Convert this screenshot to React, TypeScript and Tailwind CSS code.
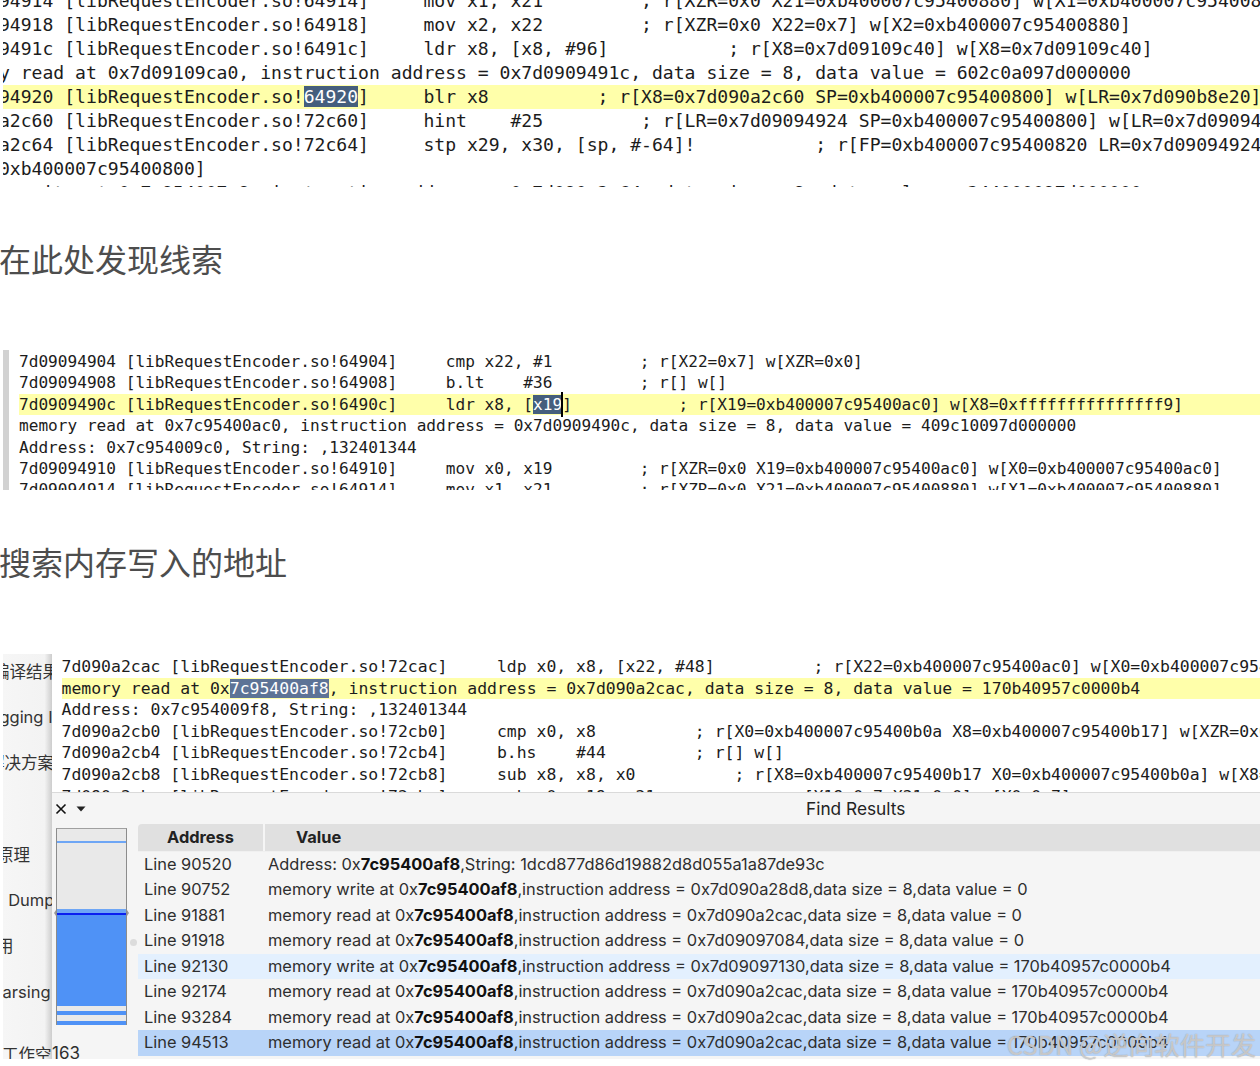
const mono = "font-['DejaVu_Sans_Mono','Liberation_Mono',monospace]";
const cjk = "font-['Noto_Sans_CJK_SC','Noto_Sans',sans-serif]";
const uiFont = "font-['Inter','Noto_Sans_CJK_SC',sans-serif]";

const Sel = ({ children, color }: { children: string; color: string }) => (
  <span className={`${color} text-white`}>{children}</span>
);

const CodeRow = ({ height, hot, children }: { height: string; hot?: boolean; children: React.ReactNode }) => (
  <div className={`${height} whitespace-pre ${hot ? "bg-[#ffffaa]" : ""}`}>{children}</div>
);

const firstBlock = [
  "7d09094914 [libRequestEncoder.so!64914]     mov x1, x21         ; r[XZR=0x0 X21=0xb400007c95400880] w[X1=0xb400007c95400880]",
  "7d09094918 [libRequestEncoder.so!64918]     mov x2, x22         ; r[XZR=0x0 X22=0x7] w[X2=0xb400007c95400880]",
  "7d0909491c [libRequestEncoder.so!6491c]     ldr x8, [x8, #96]           ; r[X8=0x7d09109c40] w[X8=0x7d09109c40]",
  "memory read at 0x7d09109ca0, instruction address = 0x7d0909491c, data size = 8, data value = 602c0a097d000000",
];

const firstBlockAfter = [
  "7d090a2c60 [libRequestEncoder.so!72c60]     hint    #25         ; r[LR=0x7d09094924 SP=0xb400007c95400800] w[LR=0x7d09094924]",
  "7d090a2c64 [libRequestEncoder.so!72c64]     stp x29, x30, [sp, #-64]!           ; r[FP=0xb400007c95400820 LR=0x7d09094924 SP=",
  "     0xb400007c95400800]",
  "memory write at 0x7c954007c8, instruction address = 0x7d090a2c64, data size = 8, data value = 344000097d000000",
];

const sidebar = [
  { text: "编译结果", cls: "-ml-[10px]" },
  { text: "Debugging Info", cls: "-ml-[45px]" },
  { text: "解决方案", cls: "-ml-[15px]" },
  { text: "", cls: "" },
  { text: "原理", cls: "-ml-[6px]" },
  { text: " Dump", cls: "ml-[0.5px]" },
  { text: "用", cls: "-ml-[6px]" },
  { text: "Parsing", cls: "-ml-[11px]" },
];

const findRows = [
  { line: "90520", before: "Address: 0x", after: ",String: 1dcd877d86d19882d8d055a1a87de93c", bg: "" },
  { line: "90752", before: "memory write at 0x", after: ",instruction address = 0x7d090a28d8,data size = 8,data value = 0", bg: "" },
  { line: "91881", before: "memory read at 0x", after: ",instruction address = 0x7d090a2cac,data size = 8,data value = 0", bg: "" },
  { line: "91918", before: "memory read at 0x", after: ",instruction address = 0x7d09097084,data size = 8,data value = 0", bg: "" },
  { line: "92130", before: "memory write at 0x", after: ",instruction address = 0x7d09097130,data size = 8,data value = 170b40957c0000b4", bg: "bg-[#e3f0fe]" },
  { line: "92174", before: "memory read at 0x", after: ",instruction address = 0x7d090a2cac,data size = 8,data value = 170b40957c0000b4", bg: "" },
  { line: "93284", before: "memory read at 0x", after: ",instruction address = 0x7d090a2cac,data size = 8,data value = 170b40957c0000b4", bg: "" },
  { line: "94513", before: "memory read at 0x", after: ",instruction address = 0x7d090a2cac,data size = 8,data value = 170b40957c0000b4", bg: "bg-[#b8d4f8]" },
];

const Thumb = () => (
  <div className="relative ml-[4px] mt-[4px] flex h-[197px] w-[71px] flex-col border border-[#8c8c8c] border-b-0 border-t-[#a0a0a0] bg-[#e9e9e9]">
    <div className="h-[12px]" />
    <div className="h-[2px] bg-[#6ea6f5]" />
    <div className="h-[66px]" />
    <div className="h-[4px] bg-[#6ea6f5]" />
    <div className="h-[2px] bg-[#0a1ff0]" />
    <div className="h-[91px] bg-[#4f92f6]" />
    <div className="h-[5px]" />
    <div className="h-[4px] bg-[#4f92f6]" />
    <div className="h-[6px]" />
    <div className="h-[4px] bg-[#4f92f6]" />
    <div className="absolute -left-[3px] top-[81px] h-0 w-0 border-y-[3px] border-r-[2px] border-y-transparent border-r-[#999]" />
    <div className="absolute -right-[3px] top-[81px] h-0 w-0 border-y-[3px] border-l-[2px] border-y-transparent border-l-[#999]" />
    <div className="absolute -right-[11px] top-[110px] h-[7px] w-[7px] rounded-full bg-[#dcdcdc]" />
  </div>
);

const FindResults = () => (
  <div className={`h-[267px] border-t border-[#dadada] bg-[#f5f5f5] text-[#2e2e2e] ${uiFont}`}>
    <div className="flex h-[31px] items-center">
      <svg width="12" height="12" viewBox="0 0 12 12" className="ml-[3px]">
        <path d="M1.5 1.5 L10.5 10.5 M10.5 1.5 L1.5 10.5" stroke="#111" strokeWidth="1.6" />
      </svg>
      <svg width="10" height="6" viewBox="0 0 10 6" className="ml-[9px]">
        <path d="M0.5 0.5 H9.5 L5 5.5 Z" fill="#222" />
      </svg>
      <span className="ml-[720px] text-[17.3px] text-[#222]">Find Results</span>
    </div>
    <div className="flex">
      <div className="w-[86px] shrink-0">
        <Thumb />
        <div className="mt-[17px] text-[17px] leading-[22px]">163</div>
      </div>
      <div className="min-w-0 flex-1 overflow-hidden">
        <div className="flex h-[27.5px] rounded-tl-[4px] border-b border-[#f0f0f0] bg-[#e0e0e0] text-[16.4px] font-bold leading-[26px] text-[#222]">
          <div className="w-[127px] border-r-2 border-[#f5f5f5] text-center">Address</div>
          <div className="pl-[31px]">Value</div>
        </div>
        {findRows.map((row) => (
          <div key={row.line} className={`flex h-[25.5px] items-center whitespace-pre text-[16.4px] ${row.bg}`}>
            <div className="w-[130px] shrink-0 pl-[6px]">Line {row.line}</div>
            <div>
              {row.before}
              <b className="text-[#111]">7c95400af8</b>
              {row.after}
            </div>
          </div>
        ))}
      </div>
    </div>
  </div>
);

export default function App() {
  return (
    <div className="relative h-[1066px] overflow-hidden bg-white text-[#1c1c1c]">
      {/* first trace */}
      <div className={`ml-[3px] h-[187px] overflow-hidden text-[18.08px] leading-[24px] ${mono}`}>
        <div className="-mt-[11px]">
          {firstBlock.map((line, i) => (
            <CodeRow key={i} height="h-[24px]">
              <span className="-ml-[58.5px] inline-block">{line}</span>
            </CodeRow>
          ))}
          <CodeRow height="h-[24px]" hot>
            <span className="-ml-[58.5px] inline-block">
              {"7d09094920 [libRequestEncoder.so!"}
              <Sel color="bg-[#455e7d]">64920</Sel>
              {"]     blr x8          ; r[X8=0x7d090a2c60 SP=0xb400007c95400800] w[LR=0x7d090b8e20]"}
            </span>
          </CodeRow>
          {firstBlockAfter.map((line, i) => (
            <CodeRow key={i} height="h-[24px]">
              <span className="-ml-[58.5px] inline-block">{line}</span>
            </CodeRow>
          ))}
        </div>
      </div>

      <h2 className={`mb-[69px] -ml-[1px] mt-[48px] h-[46px] text-[32px] font-normal leading-[46px] text-[#4d4d4d] ${cjk}`}>在此处发现线索</h2>

      {/* second trace */}
      <div className="ml-[3px] flex h-[140px] overflow-hidden">
        <div className="w-[6px] shrink-0 bg-[#d2d2d2]" />
        <div className={`min-w-0 flex-1 pl-[10px] pt-[1px] text-[16.13px] leading-[21.4px] ${mono}`}>
          <CodeRow height="h-[21.4px]">{"7d09094904 [libRequestEncoder.so!64904]     cmp x22, #1         ; r[X22=0x7] w[XZR=0x0]"}</CodeRow>
          <CodeRow height="h-[21.4px]">{"7d09094908 [libRequestEncoder.so!64908]     b.lt    #36         ; r[] w[]"}</CodeRow>
          <CodeRow height="h-[21.4px]" hot>
            {"7d0909490c [libRequestEncoder.so!6490c]     ldr x8, ["}
            <span className="relative">
              <Sel color="bg-[#455e7d]">x19</Sel>
              <span className="absolute -right-[1px] -top-[3px] h-[25px] w-[2px] bg-black" />
            </span>
            {"]           ; r[X19=0xb400007c95400ac0] w[X8=0xfffffffffffffff9]"}
          </CodeRow>
          <CodeRow height="h-[21.4px]">{"memory read at 0x7c95400ac0, instruction address = 0x7d0909490c, data size = 8, data value = 409c10097d000000"}</CodeRow>
          <CodeRow height="h-[21.4px]">{"Address: 0x7c954009c0, String: ,132401344"}</CodeRow>
          <CodeRow height="h-[21.4px]">{"7d09094910 [libRequestEncoder.so!64910]     mov x0, x19         ; r[XZR=0x0 X19=0xb400007c95400ac0] w[X0=0xb400007c95400ac0]"}</CodeRow>
          <CodeRow height="h-[21.4px]">{"7d09094914 [libRequestEncoder.so!64914]     mov x1, x21         ; r[XZR=0x0 X21=0xb400007c95400880] w[X1=0xb400007c95400880]"}</CodeRow>
        </div>
      </div>

      <h2 className={`mb-[70px] -ml-[1px] mt-[48px] h-[46px] text-[32px] font-normal leading-[46px] text-[#4d4d4d] ${cjk}`}>搜索内存写入的地址</h2>

      {/* third trace with the find panel over it */}
      <div className="ml-[3px] flex h-[405px]">
        <div className={`w-[49px] shrink-0 overflow-hidden bg-linear-to-r from-[#f6f6f6] via-[#f3f3f3] via-85% to-[#cdcdcd] pt-[0.5px] text-[16.5px] leading-[34px] text-[#333] ${uiFont}`}>
          {sidebar.map((item, i) => (
            <div key={i} className={`h-[45.8px] whitespace-pre ${item.cls}`}>{item.text || " "}</div>
          ))}
          <div className="-ml-[1px] mt-[17px] whitespace-pre">工作空间</div>
        </div>
        <div className="min-w-0 flex-1">
          <div className={`h-[138px] overflow-hidden pl-[9.5px] pt-[2px] text-[16.46px] leading-[21.6px] ${mono}`}>
            <CodeRow height="h-[21.6px]">{"7d090a2cac [libRequestEncoder.so!72cac]     ldp x0, x8, [x22, #48]          ; r[X22=0xb400007c95400ac0] w[X0=0xb400007c95400ac0]"}</CodeRow>
            <CodeRow height="h-[21.6px]" hot>
              {"memory read at 0x"}
              <Sel color="bg-[#5d7396]">7c95400af8</Sel>
              {", instruction address = 0x7d090a2cac, data size = 8, data value = 170b40957c0000b4"}
            </CodeRow>
            <CodeRow height="h-[21.6px]">{"Address: 0x7c954009f8, String: ,132401344"}</CodeRow>
            <CodeRow height="h-[21.6px]">{"7d090a2cb0 [libRequestEncoder.so!72cb0]     cmp x0, x8          ; r[X0=0xb400007c95400b0a X8=0xb400007c95400b17] w[XZR=0x0]"}</CodeRow>
            <CodeRow height="h-[21.6px]">{"7d090a2cb4 [libRequestEncoder.so!72cb4]     b.hs    #44         ; r[] w[]"}</CodeRow>
            <CodeRow height="h-[21.6px]">{"7d090a2cb8 [libRequestEncoder.so!72cb8]     sub x8, x8, x0          ; r[X8=0xb400007c95400b17 X0=0xb400007c95400b0a] w[X8=0xd]"}</CodeRow>
            <CodeRow height="h-[21.6px]">{"7d090a2cbc [libRequestEncoder.so!72cbc]     sub x0, x19, x21            ; r[X19=0x7 X21=0x0] w[X0=0x7]"}</CodeRow>
          </div>
          <FindResults />
        </div>
      </div>

      {/* watermark */}
      <div className={`absolute right-[4px] top-[1027px] whitespace-pre text-[25.5px] leading-[34px] text-[#ffffff80] [text-shadow:0_0_1px_#8a8a8a] ${cjk}`}>
        CSDN @逆向软件开发
      </div>
    </div>
  );
}
